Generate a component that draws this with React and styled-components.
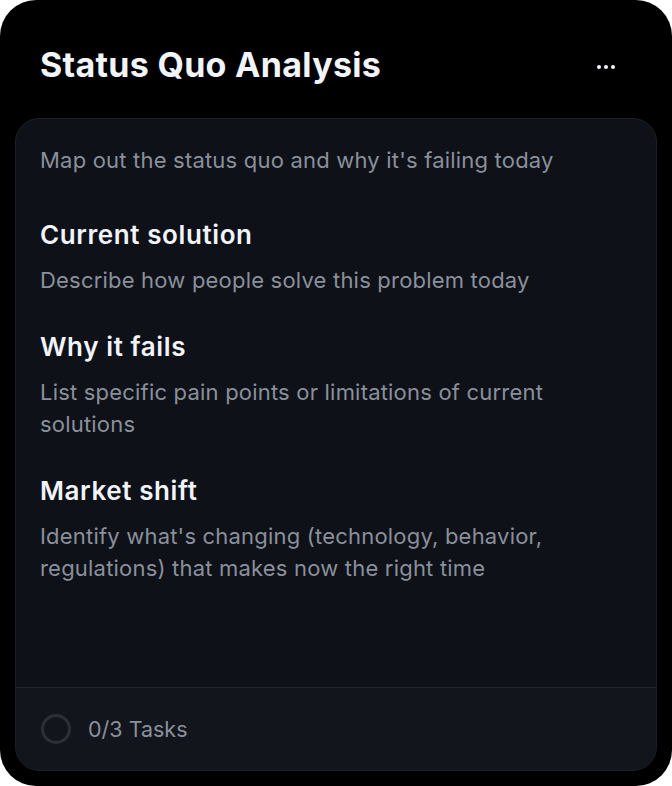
import React from "react";
import styled, { createGlobalStyle } from "styled-components";

const Global = createGlobalStyle`
  html, body { margin: 0; padding: 0; background: #ffffff; }
  body { font-family: "Inter", "Noto Sans", sans-serif; -webkit-font-smoothing: antialiased; }
  * { box-sizing: border-box; }
`;

const Card = styled.div`
  width: 672px;
  height: 786px;
  background: #000000;
  border-radius: 36px;
  display: flex;
  flex-direction: column;
  padding: 0 15px 15px 15px;
  overflow: hidden;
`;

const Header = styled.div`
  height: 118px;
  display: flex;
  align-items: center;
  justify-content: space-between;
  padding: 12px 36px 0 25px;
  flex-shrink: 0;
`;

const Title = styled.h1`
  margin: 0;
  font-size: 34px;
  font-weight: 700;
  color: #f1f4fb;
  letter-spacing: 0.3px;
  line-height: 1;
`;

const MoreButton = styled.button`
  background: none;
  border: none;
  padding: 0;
  width: 30px;
  height: 20px;
  display: flex;
  align-items: center;
  justify-content: center;
  cursor: pointer;
  margin-top: 3px;
`;

const Panel = styled.div`
  flex: 1;
  display: flex;
  flex-direction: column;
  background: #0e1118;
  border: 1px solid #1d2027;
  border-radius: 24px;
  overflow: hidden;
`;

const Body = styled.div`
  flex: 1;
  padding: 25px 40px 0 24px;
  display: flex;
  flex-direction: column;
`;

const Intro = styled.p`
  margin: 0 0 43px 0;
  font-size: 22px;
  line-height: 32px;
  letter-spacing: 0.2px;
  color: #8a909b;
`;

const Section = styled.div`
  display: flex;
  flex-direction: column;
  gap: 13px;
  margin-bottom: 35px;
`;

const Heading = styled.h2`
  margin: 0;
  font-size: 26px;
  line-height: 32px;
  font-weight: 600;
  letter-spacing: 0.6px;
  color: #f1f4fb;
`;

const Desc = styled.p`
  margin: 0;
  font-size: 22px;
  line-height: 32px;
  letter-spacing: 0.2px;
  color: #8a909b;
`;

const Footer = styled.div`
  height: 83px;
  flex-shrink: 0;
  background: #12151b;
  border-top: 1px solid #23262d;
  display: flex;
  align-items: center;
  gap: 17px;
  padding: 0 25px;
`;

const Ring = styled.span`
  width: 30px;
  height: 30px;
  border-radius: 50%;
  border: 3px solid #2b2f36;
  flex-shrink: 0;
`;

const Count = styled.span`
  font-size: 21.5px;
  color: #8a909b;
`;

const sections = [
  { title: "Current solution", desc: "Describe how people solve this problem today" },
  { title: "Why it fails", desc: "List specific pain points or limitations of current solutions" },
  { title: "Market shift", desc: "Identify what's changing (technology, behavior, regulations) that makes now the right time" },
];

export default function App() {
  return (
    <>
      <Global />
      <Card>
        <Header>
          <Title>Status Quo Analysis</Title>
          <MoreButton aria-label="More">
            <svg width="18" height="4" viewBox="0 0 18 4">
              <circle cx="2" cy="2" r="2" fill="#f1f4fb" />
              <circle cx="9" cy="2" r="2" fill="#f1f4fb" />
              <circle cx="16" cy="2" r="2" fill="#f1f4fb" />
            </svg>
          </MoreButton>
        </Header>
        <Panel>
          <Body>
            <Intro>Map out the status quo and why it's failing today</Intro>
            {sections.map((s) => (
              <Section key={s.title}>
                <Heading>{s.title}</Heading>
                <Desc>{s.desc}</Desc>
              </Section>
            ))}
          </Body>
          <Footer>
            <Ring />
            <Count>0/3 Tasks</Count>
          </Footer>
        </Panel>
      </Card>
    </>
  );
}
